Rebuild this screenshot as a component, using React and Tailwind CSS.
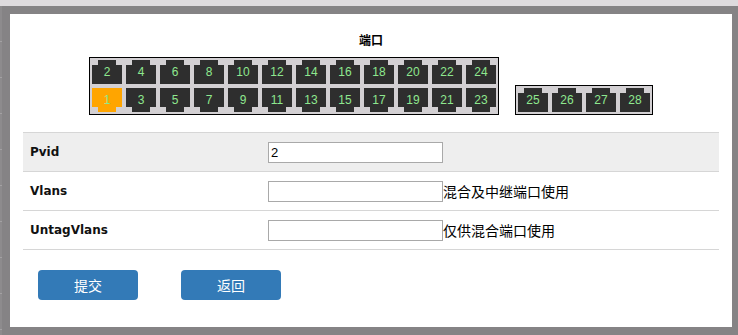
const TOP = [2, 4, 6, 8, 10, 12, 14, 16, 18, 20, 22, 24];
const BOTTOM = [1, 3, 5, 7, 9, 11, 13, 15, 17, 19, 21, 23];
const EXTRA = [25, 26, 27, 28];

const ROWS = [
  { label: 'Pvid', value: '2', note: '', shaded: true },
  { label: 'Vlans', value: '', note: '混合及中继端口使用' },
  { label: 'UntagVlans', value: '', note: '仅供混合端口使用' },
];

function Port({ n, down, active }) {
  const fill = active ? 'bg-[#ffa500]' : 'bg-[#2e2e2e]';
  return (
    <div className={`relative flex w-[30px] h-[24px] items-center ${down ? 'flex-col-reverse' : 'flex-col'}`}>
      <div className={`w-[18px] h-[5px] ${fill}`} />
      <div className={`w-[30px] h-[19px] ${fill}`} />
      <span className="absolute inset-0 flex items-center justify-center text-[12px] leading-none text-[#8ee88e]">
        {n}
      </span>
    </div>
  );
}

export default function App() {
  return (
    <div className="w-[738px] h-[335px] bg-[#858385] flex flex-col overflow-hidden font-['Liberation_Sans','Noto_Sans_CJK_SC',sans-serif]">
      <div className="h-[6px] bg-[#dedbde]" />
      <div className="flex flex-1">
        {/* left edge */}
        <div className="w-[10px] flex">
          <div className="w-[2px] flex flex-col bg-[#8d8b8d]">
            {Array.from({ length: 9 }).map((_, i) => (
              <div key={i} className="h-[36px] border-b border-[#a3a1a3]" />
            ))}
          </div>
        </div>

        <div className="w-[722px] mt-[8px] mb-[8px] bg-white flex flex-col">
          {/* ports */}
          <p className="mt-[18px] h-[16px] leading-[16px] text-center text-[12px] font-bold text-black font-['Noto_Sans_CJK_SC',sans-serif]">
            端口
          </p>
          <div className="mt-[9px] flex justify-center items-end gap-[16px]">
            <div className="border border-black bg-[#d3d0d3] p-[2px] flex flex-col gap-[4px]">
              <div className="flex gap-[4px]">
                {TOP.map((n) => (
                  <Port key={n} n={n} />
                ))}
              </div>
              <div className="flex gap-[4px]">
                {BOTTOM.map((n) => (
                  <Port key={n} n={n} down active={n === 1} />
                ))}
              </div>
            </div>
            <div className="border border-black bg-[#d3d0d3] p-[2px] flex gap-[4px]">
              {EXTRA.map((n) => (
                <Port key={n} n={n} />
              ))}
            </div>
          </div>

          {/* form */}
          <div className="mt-[17px] mx-[13px] border-t border-[#d6d6d6]">
            {ROWS.map((r) => (
              <div
                key={r.label}
                className={`h-[39px] flex items-center border-b border-[#d6d6d6] ${r.shaded ? 'bg-[#eeeeee]' : ''}`}
              >
                <div className="w-[245px] pl-[7px] text-[12px] font-bold text-[#111] font-['DejaVu_Sans',sans-serif]">
                  {r.label}
                </div>
                <input
                  readOnly
                  value={r.value}
                  className="w-[175px] h-[21px] border border-[#a9a9a9] bg-white px-[2px] text-[13px] text-black outline-none"
                />
                <span className="text-[14px] text-black font-['Noto_Sans_CJK_SC',sans-serif]">{r.note}</span>
              </div>
            ))}
          </div>

          <div className="mt-[20px] ml-[28px] flex gap-[43px]">
            <button className="w-[100px] h-[30px] rounded-[4px] bg-[#337ab7] text-white text-[14px] font-['Noto_Sans_CJK_SC',sans-serif]">
              提交
            </button>
            <button className="w-[100px] h-[30px] rounded-[4px] bg-[#337ab7] text-white text-[14px] font-['Noto_Sans_CJK_SC',sans-serif]">
              返回
            </button>
          </div>
        </div>
      </div>
    </div>
  );
}
